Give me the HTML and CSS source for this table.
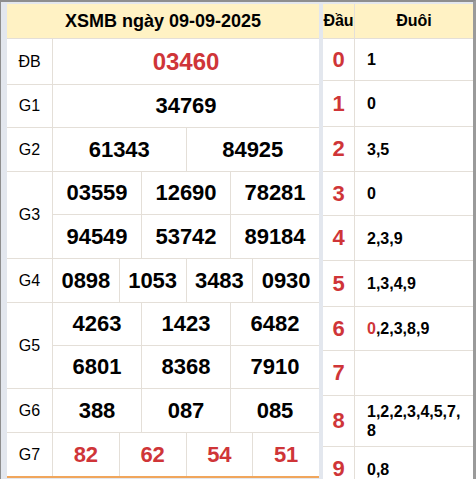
FILE: index.html
```html
<!DOCTYPE html>
<html lang="vi">
<head>
<meta charset="utf-8">
<title>XSMB ngày 09-09-2025</title>
<link rel="stylesheet" href="styles.css">
</head>
<body>
<div class="frame">
  <div class="kq">
    <div class="head">XSMB ngày 09-09-2025</div>

    <div class="lbl">ĐB</div>
    <div class="num db s12">03460</div>

    <div class="lbl">G1</div>
    <div class="num s12">34769</div>

    <div class="lbl">G2</div>
    <div class="num s6">61343</div>
    <div class="num s6">84925</div>

    <div class="lbl r2">G3</div>
    <div class="num s4">03559</div>
    <div class="num s4">12690</div>
    <div class="num s4">78281</div>
    <div class="num s4">94549</div>
    <div class="num s4">53742</div>
    <div class="num s4">89184</div>

    <div class="lbl">G4</div>
    <div class="num s3">0898</div>
    <div class="num s3">1053</div>
    <div class="num s3">3483</div>
    <div class="num s3">0930</div>

    <div class="lbl r2">G5</div>
    <div class="num s4">4263</div>
    <div class="num s4">1423</div>
    <div class="num s4">6482</div>
    <div class="num s4">6801</div>
    <div class="num s4">8368</div>
    <div class="num s4">7910</div>

    <div class="lbl">G6</div>
    <div class="num s4">388</div>
    <div class="num s4">087</div>
    <div class="num s4">085</div>

    <div class="lbl">G7</div>
    <div class="num red s3">82</div>
    <div class="num red s3">62</div>
    <div class="num red s3">54</div>
    <div class="num red s3">51</div>
  </div>

  <div class="lt">
    <div class="lt-head">Đầu</div>
    <div class="lt-head">Đuôi</div>

    <div class="dau">0</div><div class="duoi">1</div>
    <div class="dau">1</div><div class="duoi">0</div>
    <div class="dau">2</div><div class="duoi">3,5</div>
    <div class="dau">3</div><div class="duoi">0</div>
    <div class="dau">4</div><div class="duoi">2,3,9</div>
    <div class="dau">5</div><div class="duoi">1,3,4,9</div>
    <div class="dau">6</div><div class="duoi"><span class="red">0</span>,2,3,8,9</div>
    <div class="dau">7</div><div class="duoi"></div>
    <div class="dau">8</div><div class="duoi">1,2,2,3,4,5,7,8</div>
    <div class="dau">9</div><div class="duoi">0,8</div>
  </div>
</div>
</body>
</html>
```

FILE: styles.css
```css
html, body {
  margin: 0;
  padding: 0;
  background: #ffffff;
}

body {
  font-family: "Liberation Sans", Arial, sans-serif;
  color: #000;
}

.frame {
  box-sizing: border-box;
  width: 476px;
  height: 479px;
  overflow: hidden;
  border-top: 2px solid #8e8e8e;
  border-left: 1px solid #8e8e8e;
  border-right: 3px solid #9a9a9a;
  background: #e3e7ee;
  padding: 2px 0 0 6px;
  display: flex;
  align-items: flex-start;
  gap: 4px;
}

/* ---------- results table ---------- */
.kq {
  width: 312px;
  flex: 0 0 312px;
  display: grid;
  grid-template-columns: 45px repeat(12, 1fr);
  grid-template-rows: 34px 45px 42px 43px 42px 43px 43px 42px 42px 43px 43px;
  gap: 1px;
  background: #e4dfd8;
  border-bottom: 2px solid #f0a65c;
}

.kq > div {
  background: #fff;
  display: flex;
  align-items: center;
  justify-content: center;
}

.kq > .head {
  grid-column: 1 / -1;
  background: #fff2c4;
  font-size: 18px;
  font-weight: bold;
}

.lbl {
  grid-column: 1;
  font-size: 16px;
}

.r2 {
  grid-row: span 2;
}

.num {
  font-size: 22px;
  font-weight: bold;
  letter-spacing: 0;
}

.num.db {
  font-size: 24px;
  color: #cf3538;
}

.s12 { grid-column: span 12; }
.s6  { grid-column: span 6; }
.s4  { grid-column: span 4; }
.s3  { grid-column: span 3; }

.red {
  color: #cf3538;
}

/* ---------- loto table ---------- */
.lt {
  width: 150px;
  flex: 0 0 150px;
  display: grid;
  grid-template-columns: 31px 1fr;
  grid-template-rows: 34px 41px 45px 44px 43px 44px 45px 43px 44px 50px 44px;
  gap: 1px;
  background: #e4dfd8;
}

.lt > div {
  background: #fff;
  display: flex;
  align-items: center;
}

.lt > .lt-head {
  background: #fff2c4;
  justify-content: center;
  font-size: 16px;
  font-weight: bold;
}

.dau {
  justify-content: center;
  font-size: 22px;
  font-weight: bold;
  color: #cf3538;
}

.duoi {
  box-sizing: border-box;
  padding: 0 8px 0 12px;
  font-size: 16px;
  font-weight: bold;
  line-height: 19px;
  word-break: break-all;
}
```
